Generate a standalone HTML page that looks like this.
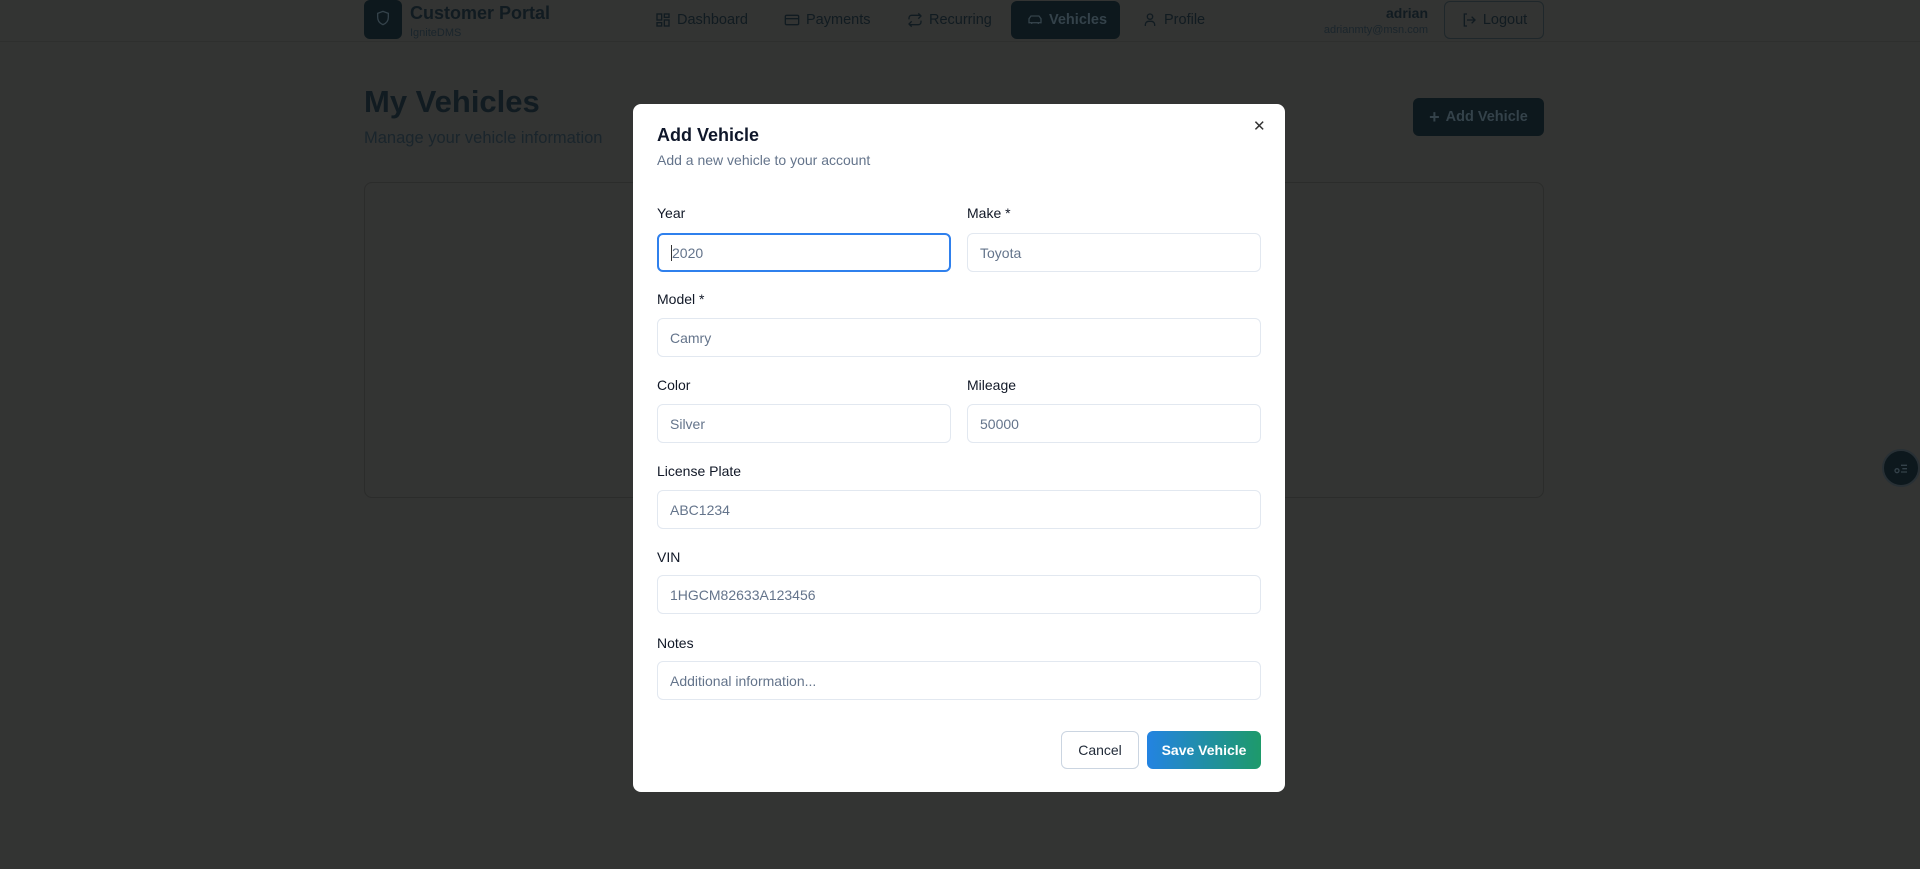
<!DOCTYPE html>
<html><head><meta charset="utf-8"><style>
*{box-sizing:border-box;margin:0;padding:0}
body{width:1920px;height:869px;overflow:hidden;background:#333433;font-family:"Liberation Sans",sans-serif;position:relative;color:#0c161c}
.a{position:absolute}
.hdr{left:0;top:0;width:1920px;height:42px;border-bottom:1px solid #2e2f2e}
.nav{font-size:14.5px;color:#111b21;top:12px;display:flex;align-items:center;gap:6px}
.ic{width:16px;height:16px;stroke:#111b21;fill:none;stroke-width:2}
.modal{left:633px;top:104px;width:652px;height:688px;background:#fff;border-radius:8px}
.lbl{font-size:14px;color:#111827;font-weight:500}
.inp{height:39px;border:1px solid #e2e8f0;border-radius:6px;font-size:14px;color:#64748b;padding:0 12px;display:flex;align-items:center}
</style></head><body>
<div class="a hdr"></div>
<div class="a" style="left:364px;top:0;width:38px;height:39px;background:#0d181d;border-radius:6px"><svg class="ic" style="margin:10px 11px;stroke:#34424a" viewBox="0 0 24 24"><path d="M12 2l8 3v6c0 5-3.5 9-8 11-4.5-2-8-6-8-11V5z"/></svg></div>
<div class="a" style="left:410px;top:3px;font-size:18px;font-weight:700;color:#111b21">Customer Portal</div>
<div class="a" style="left:410px;top:27px;font-size:11px;color:#1a252c">IgniteDMS</div>
<div class="a nav" style="left:655px"><svg class="ic" viewBox="0 0 24 24"><rect x="3" y="3" width="7" height="9"/><rect x="14" y="3" width="7" height="5"/><rect x="14" y="12" width="7" height="9"/><rect x="3" y="16" width="7" height="5"/></svg>Dashboard</div>
<div class="a nav" style="left:784px"><svg class="ic" viewBox="0 0 24 24"><rect x="2" y="5" width="20" height="14" rx="2"/><path d="M2 10h20"/></svg>Payments</div>
<div class="a nav" style="left:907px"><svg class="ic" viewBox="0 0 24 24"><path d="M17 2l4 4-4 4M3 11V9a4 4 0 014-4h14M7 22l-4-4 4-4M21 13v2a4 4 0 01-4 4H3"/></svg>Recurring</div>
<div class="a" style="left:1011px;top:1px;width:109px;height:38px;background:#0d181d;border-radius:6px"></div>
<div class="a nav" style="left:1027px;color:#34424a;font-weight:600"><svg class="ic" style="stroke:#34424a" viewBox="0 0 24 24"><path d="M3 16V10l3-4h12l3 4v6zM7 16v2M17 16v2"/></svg>Vehicles</div>
<div class="a nav" style="left:1142px"><svg class="ic" viewBox="0 0 24 24"><circle cx="12" cy="7" r="4"/><path d="M5 21v-2a5 5 0 015-5h4a5 5 0 015 5v2"/></svg>Profile</div>
<div class="a" style="right:492px;top:5px;font-size:14px;font-weight:700;color:#111b21;text-align:right">adrian</div>
<div class="a" style="right:492px;top:24px;font-size:11px;color:#1a252c;text-align:right">adrianmty@msn.com</div>
<div class="a nav" style="left:1444px;top:1px;width:100px;height:38px;border:1px solid #1f272b;border-radius:6px;justify-content:center"><svg class="ic" viewBox="0 0 24 24"><path d="M9 21H5V3h4M16 17l5-5-5-5M21 12H9"/></svg>Logout</div>
<div class="a" style="left:364px;top:84px;font-size:31px;font-weight:700;color:#111b21">My Vehicles</div>
<div class="a" style="left:364px;top:129px;font-size:16.5px;color:#1a252c">Manage your vehicle information</div>
<div class="a nav" style="left:1413px;top:98px;width:131px;height:38px;background:#0d181d;border-radius:6px;justify-content:center;color:#34424a;font-weight:600"><span style="font-size:18px">+</span>Add Vehicle</div>
<div class="a" style="left:364px;top:182px;width:1180px;height:316px;border:1px solid #2b2c2b;border-radius:8px"></div>
<div class="a" style="left:1882px;top:449px;width:38px;height:38px;border-radius:50%;background:#0d181d;border:2px solid #283035"><svg style="position:absolute;left:9px;top:9px;width:16px;height:16px;stroke:#34424a;fill:none;stroke-width:2" viewBox="0 0 24 24"><circle cx="6" cy="16" r="3"/><path d="M12 8h9M14 13h7M12 18h9"/></svg></div>
<div class="a modal">
 <div class="a" style="left:24px;top:21px;font-size:18px;font-weight:600;color:#0f172a">Add Vehicle</div>
 <div class="a" style="left:24px;top:48px;font-size:14px;color:#64748b">Add a new vehicle to your account</div>
 <div class="a" style="left:620px;top:13px;font-size:15px;color:#333">✕</div>
 <div class="a lbl" style="left:24px;top:101px">Year</div>
 <div class="a inp" style="left:24px;top:129px;width:294px;border:2px solid #2f80ed;color:#64748b"><span style="border-left:1px solid #333;padding-left:0">2020</span></div>
 <div class="a lbl" style="left:334px;top:101px">Make *</div>
 <div class="a inp" style="left:334px;top:129px;width:294px">Toyota</div>
 <div class="a lbl" style="left:24px;top:187px">Model *</div>
 <div class="a inp" style="left:24px;top:214px;width:604px">Camry</div>
 <div class="a lbl" style="left:24px;top:273px">Color</div>
 <div class="a inp" style="left:24px;top:300px;width:294px">Silver</div>
 <div class="a lbl" style="left:334px;top:273px">Mileage</div>
 <div class="a inp" style="left:334px;top:300px;width:294px">50000</div>
 <div class="a lbl" style="left:24px;top:359px">License Plate</div>
 <div class="a inp" style="left:24px;top:386px;width:604px">ABC1234</div>
 <div class="a lbl" style="left:24px;top:445px">VIN</div>
 <div class="a inp" style="left:24px;top:471px;width:604px">1HGCM82633A123456</div>
 <div class="a lbl" style="left:24px;top:531px">Notes</div>
 <div class="a inp" style="left:24px;top:557px;width:604px">Additional information...</div>
 <div class="a" style="left:428px;top:627px;width:78px;height:38px;border:1px solid #cbd5e1;border-radius:6px;font-size:14px;font-weight:500;color:#1f2937;display:flex;align-items:center;justify-content:center">Cancel</div>
 <div class="a" style="left:514px;top:627px;width:114px;height:38px;border-radius:6px;background:linear-gradient(90deg,#2383e2,#1e9a6a);font-size:14px;font-weight:700;color:#fff;display:flex;align-items:center;justify-content:center">Save Vehicle</div>
</div>
</body></html>
